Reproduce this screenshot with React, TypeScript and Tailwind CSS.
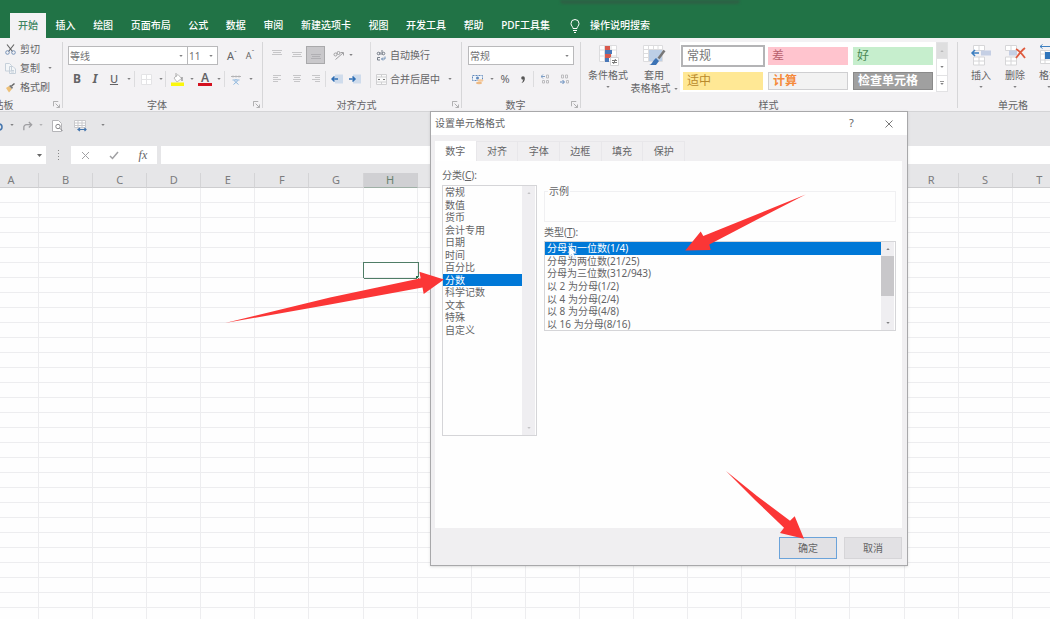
import React, { useState } from 'react';
import clsx from 'clsx';

const ribbonTabs = ['开始', '插入', '绘图', '页面布局', '公式', '数据', '审阅', '新建选项卡', '视图', '开发工具', '帮助', 'PDF工具集'];
const columns = 'ABCDEFGHIJKLMNOPQRST'.split('');
const rows = Array.from({ length: 29 }, (_, i) => i + 1);
const dialogTabs = ['数字', '对齐', '字体', '边框', '填充', '保护'];
const categories = ['常规', '数值', '货币', '会计专用', '日期', '时间', '百分比', '分数', '科学记数', '文本', '特殊', '自定义'];
const fractionTypes = [
  '分母为一位数(1/4)',
  '分母为两位数(21/25)',
  '分母为三位数(312/943)',
  '以 2 为分母(1/2)',
  '以 4 为分母(2/4)',
  '以 8 为分母(4/8)',
  '以 16 为分母(8/16)',
];

const cellStyles = [
  { name: '常规', className: 'bg-white text-[#777] outline-2 outline-[#b4b4b6]' },
  { name: '差', className: 'bg-[#ffc4ce] text-[#b8606c]' },
  { name: '好', className: 'bg-[#c6eecd] text-[#4b8a55]' },
  { name: '适中', className: 'bg-[#ffe895] text-[#b98a2c]' },
  { name: '计算', className: 'border border-[#cfcfd1] bg-[#f2f2f2] font-bold text-[#f58a3c]' },
  { name: '检查单元格', className: 'border border-[#8a8a8a] bg-[#a0a0a0] font-bold text-white' },
];

const Caret: React.FC<{ className?: string }> = ({ className }) => (
  <svg viewBox="0 0 5 3" className={clsx('h-[2px] w-1 shrink-0', className)} fill="#808082">
    <path d="M0 0h5L2.500 3z" />
  </svg>
);

const CaretButton: React.FC<{ label: string; className: string }> = ({ label, className }) => (
  <button aria-label={label} className={clsx('flex h-4 shrink-0 items-center justify-center', className)}>
    <Caret />
  </button>
);

const IconButton: React.FC<{ label: string; className: string; children: React.ReactNode }> = ({ label, className, children }) => (
  <button aria-label={label} className={clsx('flex h-[18px] shrink-0 items-center justify-center', className)}>
    {children}
  </button>
);

const Divider = () => <span className="h-4 w-px shrink-0 bg-[#dcdcde]" />;

const Group: React.FC<{ title: string; className: string; launcher?: boolean; children: React.ReactNode }> = ({
  title,
  className,
  launcher,
  children,
}) => (
  <section className={clsx('relative flex h-[73px] shrink-0 flex-col', className)}>
    <div className="h-[60px]">{children}</div>
    <div className="flex h-[13px] items-center leading-3">
      <span className="flex-1 pr-[2px] text-center">{title}</span>
      {launcher && (
        <button aria-label={`${title}设置`} className="flex w-[10px] justify-start">
          <svg viewBox="0 0 8 8" className="h-[7px] w-[7px]" fill="none" stroke="#a2a2a4">
            <path d="M.5 6V.5H6M3 3l4 4M7.500 4v3.500H4" />
          </svg>
        </button>
      )}
    </div>
    <span className="absolute top-1 right-0 h-[66px] w-px bg-[#d6d6d8]" />
  </section>
);

const Select: React.FC<{ label: string; value: string; className: string }> = ({ label, value, className }) => (
  <label className={clsx('relative flex h-[19px] items-center border border-[#b9b9bb] bg-white', className)}>
    <select aria-label={label} className="w-full appearance-none bg-transparent pl-px leading-4 text-[#707072] outline-none">
      <option>{value}</option>
    </select>
    <Caret className="absolute right-1" />
  </label>
);

const AlignLines: React.FC<{ d: string }> = ({ d }) => (
  <svg viewBox="0 0 10 10" className="h-[10px] w-[10px]" fill="none" stroke="#c6c6c8">
    <path d={d} />
  </svg>
);

const ClipboardGroup = () => (
  <Group title="剪贴板" className="-ml-[54px] w-[117px]" launcher>
    <div className="flex flex-col gap-px pt-[2px] pl-[59px]">
      <button className="flex h-[18px] items-center gap-1">
        <svg viewBox="0 0 11 11" className="h-[11px] w-[11px]" fill="none">
          <path d="M2 .5l5.500 7M9 .5L3.500 7.500" stroke="#666" strokeWidth="1.200" />
          <circle cx="2.500" cy="8.500" r="1.800" stroke="#7793b8" />
          <circle cx="8.500" cy="8.500" r="1.800" stroke="#7793b8" />
        </svg>
        剪切
      </button>
      <div className="flex items-center">
        <button className="flex h-[18px] items-center gap-1">
          <svg viewBox="0 0 11 11" className="h-[11px] w-[11px]" fill="#f4f6f8" stroke="#c6d0da">
            <path d="M.5.500h4l2 2v5.500h-6zM4.500 3.500h3.500l2.500 2.500v4.500h-6z" />
            <path d="M6 7.500h3M6 9h3" />
          </svg>
          复制
        </button>
        <CaretButton label="复制选项" className="ml-1 w-3" />
      </div>
      <button className="flex h-[18px] items-center gap-1">
        <svg viewBox="0 0 11 11" className="h-[11px] w-[11px]">
          <path d="M1 6l3-2 3 3-3 3.500z" fill="#edc078" />
          <path d="M4 4l1.500-1L8 5.500 7 7z" fill="#777" />
          <path d="M6.500 4L9.500 1.500" stroke="#666" strokeWidth="1.600" />
        </svg>
        格式刷
      </button>
    </div>
  </Group>
);

const FontGroup = () => (
  <Group title="字体" className="w-[200px]" launcher>
    <div className="flex items-center pt-2 pl-[5px]">
      <Select label="字体" value="等线" className="w-[120px]" />
      <Select label="字号" value="11" className="-ml-px w-[31px]" />
      <button aria-label="增大字号" className="ml-[5px] w-[18px] text-[11px] leading-4">
        A<sup className="text-[7px]">ˆ</sup>
      </button>
      <button aria-label="减小字号" className="w-[18px] text-[9px] leading-4">
        A<sup className="text-[7px]">ˇ</sup>
      </button>
    </div>
    <div className="flex items-center pt-[5px] pl-[5px]">
      <button className="w-[18px] text-xs leading-4 font-bold">B</button>
      <button className="w-[18px] text-xs leading-4 font-bold italic">I</button>
      <button className="w-5 text-[11px] leading-4 font-medium underline">U</button>
      <CaretButton label="下划线选项" className="w-[10px]" />
      <Divider />
      <IconButton label="边框" className="w-[22px]">
        <svg viewBox="0 0 11 11" className="h-[11px] w-[11px]" fill="#fff" stroke="#e4e4e6">
          <path d="M.5.500h10v10H.5zM5.500.500v10M.5 5.500h10" />
        </svg>
      </IconButton>
      <CaretButton label="边框选项" className="w-2" />
      <Divider />
      <IconButton label="填充颜色" className="w-[22px]">
        <svg viewBox="0 0 13 13" className="h-[13px] w-[13px]">
          <path d="M3 5l4-3.500 3.500 4L6 9z" fill="#fff" stroke="#bbb" />
          <path d="M5 0v4" stroke="#aaa" />
          <path d="M11 4v4" stroke="#777" />
          <path d="M0 9.500h13V13H0z" fill="#fbf70c" />
        </svg>
      </IconButton>
      <CaretButton label="填充选项" className="w-2" />
      <button aria-label="字体颜色" className="ml-[2px] flex h-[14px] w-[14px] flex-col items-center border-b-[3px] border-[#d4111f] text-xs leading-[11px] font-semibold">
        A
      </button>
      <CaretButton label="字体颜色选项" className="ml-[2px] w-[10px]" />
      <Divider />
      <IconButton label="拼音指南" className="w-[22px]">
        <svg viewBox="0 0 10 11" className="h-[11px] w-[10px]" fill="none">
          <path d="M0 2.500h10M2 1.500v2M5 1.500v2M8 1.500v2" stroke="#b4b4b6" />
          <path d="M1.500 6h7M5 5v1M3 6.500l4.500 4M7 6.500l-4.500 4" stroke="#8db6dd" />
        </svg>
      </IconButton>
      <CaretButton label="拼音选项" className="w-2" />
    </div>
  </Group>
);

const AlignGroup = () => (
  <Group title="对齐方式" className="w-[199px]" launcher>
    <div className="flex">
      <div className="flex w-[107px] flex-col gap-[6px] pt-2 pl-1">
        <div className="flex items-center">
          <IconButton label="顶端对齐" className="w-5">
            <AlignLines d="M0 .5h10M1 2.500h8M0 4.500h10" />
          </IconButton>
          <IconButton label="垂直居中" className="w-[19px]">
            <AlignLines d="M0 2.500h10M1 4.500h8M0 6.500h10" />
          </IconButton>
          <IconButton label="底端对齐" className="w-[19px] border border-[#a9a9ab] bg-[#c9c8cb]">
            <svg viewBox="0 0 10 10" className="h-[10px] w-[10px]" fill="none" stroke="#b0afb3">
              <path d="M0 4.500h10M1 6.500h8M0 8.500h10" />
            </svg>
          </IconButton>
          <IconButton label="方向" className="ml-1 w-[18px]">
            <svg viewBox="0 0 11 11" className="h-[11px] w-[11px]" fill="none" stroke="#a0a0a2">
              <path d="M2.500 9.500L10 3M7.500 2.500H10.500V5.500" />
              <circle cx="2.500" cy="4.500" r="1.500" />
              <circle cx="5.500" cy="3" r="1.500" />
            </svg>
          </IconButton>
          <CaretButton label="方向选项" className="w-2" />
        </div>
        <div className="flex items-center">
          <IconButton label="左对齐" className="w-5">
            <AlignLines d="M1 1.500h8M1 3.500h5M1 5.500h8M1 7.500h5" />
          </IconButton>
          <IconButton label="居中" className="w-[19px]">
            <AlignLines d="M1 1.500h8M2 3.500h6M1 5.500h8M2 7.500h6" />
          </IconButton>
          <IconButton label="右对齐" className="w-[19px]">
            <AlignLines d="M1 1.500h8M4 3.500h5M1 5.500h8M4 7.500h5" />
          </IconButton>
          <Divider />
          <IconButton label="减少缩进" className="ml-[2px] w-[18px]">
            <svg viewBox="0 0 12 10" className="h-[10px] w-3" fill="none">
              <path d="M4 .5h8v9H4z" fill="#cfdcec" />
              <path d="M7 5H1M3.500 2.500L1 5l2.500 2.500" stroke="#2f6fb5" strokeWidth="1.500" />
            </svg>
          </IconButton>
          <IconButton label="增加缩进" className="w-[18px]">
            <svg viewBox="0 0 12 10" className="h-[10px] w-3" fill="none">
              <path d="M4 .5h8v9H4z" fill="#cfdcec" />
              <path d="M0 5h6M3.500 2.500L6 5 3.500 7.500" stroke="#2f6fb5" strokeWidth="1.500" />
            </svg>
          </IconButton>
        </div>
      </div>
      <div className="mt-1 flex flex-col gap-[6px] border-l border-[#dcdcde] pt-1 pl-[5px]">
        <button className="flex h-[18px] items-center gap-[3px]">
          <svg viewBox="0 0 11 11" className="h-[11px] w-[11px]" fill="none" stroke="#777f8a">
            <circle cx="2.500" cy="3.500" r="1.300" />
            <path d="M4 2v3M6 0v5" />
            <circle cx="7.500" cy="3.500" r="1.300" />
            <path d="M4 7.500H1.500v2.500H4" />
            <path d="M9 6.500V9H5.500M7 7.500L5.500 9 7 10.500" stroke="#6f8fb5" />
          </svg>
          自动换行
        </button>
        <div className="flex items-center">
          <button className="flex h-[18px] items-center gap-[3px]">
            <svg viewBox="0 0 11 11" className="h-[11px] w-[11px]" fill="#fafafa" stroke="#d0d0d2">
              <path d="M.5.500h10v10H.5zM.5 3h10M.5 8h10M5.500 0v3M5.500 8v3" />
              <path d="M2 5.500h2M7 5.500h2" stroke="#777" />
            </svg>
            合并后居中
          </button>
          <CaretButton label="合并选项" className="ml-1 w-3" />
        </div>
      </div>
    </div>
  </Group>
);

const NumberGroup = () => (
  <Group title="数字" className="w-[119px]" launcher>
    <div className="pt-2 pr-[7px] pl-[6px]">
      <Select label="数字格式" value="常规" className="w-full" />
    </div>
    <div className="flex items-center pt-[5px] pl-[6px]">
      <IconButton label="会计数字格式" className="w-[19px]">
        <svg viewBox="0 0 12 11" className="h-[11px] w-3">
          <path d="M.5 1.500h10v5H.5z" fill="#eef4fb" stroke="#6189bb" strokeDasharray="2 1" />
          <circle cx="5.500" cy="4" r="1.500" fill="#6189bb" />
          <ellipse cx="8.500" cy="6.500" rx="3" ry="1.300" fill="#f5c99b" />
          <ellipse cx="7" cy="9" rx="3" ry="1.300" fill="#edba83" />
        </svg>
      </IconButton>
      <CaretButton label="会计格式选项" className="w-[10px]" />
      <button className="w-4 text-[11px] leading-4">%</button>
      <button aria-label="千位分隔样式" className="flex h-4 w-5 items-center justify-center">
        <svg viewBox="0 0 4 7" className="h-[7px] w-1" fill="#555">
          <circle cx="2" cy="2" r="1.800" />
          <path d="M3.800 2C4 5 2.500 6.500.5 7c1-1 1.500-2 1.500-3z" />
        </svg>
      </button>
      <Divider />
      <IconButton label="增加小数位数" className="w-[22px]">
        <svg viewBox="0 0 9 10" className="h-[10px] w-[9px]" fill="none">
          <path d="M4 2.500H0M2 .5l-2 2 2 2" stroke="#7f9fc6" />
          <path d="M5.500 1h2v3h-2zM1.500 6.500h2V9h-2zM5.500 6.500h2V9h-2z" stroke="#bcbcbf" />
        </svg>
      </IconButton>
      <IconButton label="减少小数位数" className="w-4">
        <svg viewBox="0 0 9 10" className="h-[10px] w-[9px]" fill="none">
          <path d="M1.500 1h2v3h-2zM5.500 1h2v3h-2zM6.500 6.500h2V9h-2z" stroke="#bcbcbf" />
          <path d="M0 8h4M2.500 6l2 2-2 2" stroke="#6189bb" />
        </svg>
      </IconButton>
    </div>
  </Group>
);

const StylesGroup = () => (
  <Group title="样式" className="w-[377px]">
    <div className="flex">
      <button className="ml-[7px] flex w-10 flex-col items-center pt-[7px] leading-[13px]">
        <svg viewBox="0 0 21 21" className="mb-[3px] h-[21px] w-[21px]">
          <path d="M1.500.500h17v16h-17zM6.500.500v16M13 .5v16M1 5h18M1 11h18" fill="#fff" stroke="#dcdcde" />
          <path d="M7 1h5v4H7z" fill="#d9594c" />
          <path d="M7 5h7v4H7z" fill="#4a78b8" />
          <path d="M7 9h6v4H7z" fill="#d9594c" />
          <path d="M7 13h4v4H7z" fill="#4a78b8" />
          <path d="M12.500 12.500h8v8h-8z" fill="#fff" stroke="#d4d4d6" />
          <path d="M14 15.500h5M14 17.500h5M17.500 14l-2 5" stroke="#777" />
        </svg>
        条件格式
        <Caret className="mt-1" />
      </button>
      <button className="ml-[2px] flex w-12 flex-col items-center pt-[7px] leading-[13px]">
        <svg viewBox="0 0 23 21" className="mb-[3px] h-[21px] w-[23px]">
          <path d="M.5.500h19v16H.5zM.5 4.500h19M5.500.500v16M10.500.500v16M15 .5v16M.5 8.500h19M.5 12.500h19" fill="#fff" stroke="#dcdcde" />
          <path d="M6 5h13v11H6z" fill="#bccfe6" />
          <path d="M21.500 5.500l-6 8" stroke="#777" strokeWidth="2.500" />
          <path d="M13 13l3 3-3 4H6c3 0 4-5 7-7z" fill="#3c73b5" />
        </svg>
        套用
        <span className="flex items-center gap-[3px] whitespace-nowrap">
          表格格式
          <Caret />
        </span>
      </button>
      <div className="mt-1 ml-[2px] flex h-[50px] bg-white pl-[3px] text-xs">
        <div className="grid grid-cols-3 gap-[5px] pt-[5px]">
          {cellStyles.map((s) => (
            <button key={s.name} className={clsx('flex h-[18px] w-20 items-center px-1 leading-4', s.className)}>
              {s.name}
            </button>
          ))}
        </div>
        <div className="ml-[3px] flex w-3 flex-col border border-[#e2e2e4]">
          <button aria-label="上一行" className="flex flex-1 items-center justify-center bg-[#dededf]">
            <Caret className="rotate-180 opacity-40" />
          </button>
          <button aria-label="下一行" className="flex flex-1 items-center justify-center border-y border-[#e2e2e4]">
            <Caret />
          </button>
          <button aria-label="其他样式" className="flex flex-1 flex-col items-center justify-center gap-px">
            <span className="h-px w-1 bg-[#999]" />
            <Caret />
          </button>
        </div>
      </div>
    </div>
  </Group>
);

const CellsGroup = () => (
  <Group title="单元格" className="w-[112px]">
    <div className="flex pt-[6px] pl-[6px]">
      <button className="flex w-[34px] flex-col items-center leading-[13px]">
        <svg viewBox="0 0 22 22" className="mb-[3px] h-[22px] w-[22px]" fill="#fff">
          <path d="M3.500 1.500h11v5h-11zM3.500 13h11v8h-11zM9 1.500v5M9 13v8M3.500 17h11" stroke="#d6d6d8" />
          <path d="M11 6.500h10v5H11z" fill="#c5cfe4" />
          <path d="M9 9H2M5 6L2 9l3 3" fill="none" stroke="#3d7fc0" strokeWidth="1.500" />
        </svg>
        插入
        <Caret className="mt-1" />
      </button>
      <button className="flex w-[34px] flex-col items-center leading-[13px]">
        <svg viewBox="0 0 22 22" className="mb-[3px] h-[22px] w-[22px]" fill="#fff">
          <path d="M1.500 1.500h11v5h-11zM1.500 13h11v8h-11zM7 1.500v5M7 13v8M1.500 17h11" stroke="#d6d6d8" />
          <path d="M5 6.500h8v5H5z" fill="#c5cfe4" />
          <path d="M12 5c4 2 6 5 9 9M21 4c-4 3-6 6-9 10" fill="none" stroke="#de5b3f" strokeWidth="1.800" />
        </svg>
        删除
        <Caret className="mt-1" />
      </button>
      <button className="flex w-[34px] flex-col items-center leading-[13px]">
        <svg viewBox="0 0 22 22" className="mb-[3px] h-[22px] w-[22px]" fill="#fff">
          <path d="M2.500 6.500h17v13h-17zM7 6.500v13M14 6.500v13M2.500 10h17M2.500 16h17" stroke="#d6d6d8" />
          <path d="M2 2.500h18M4.500.500L2 2.500l2.500 2M17.500.500L20 2.500l-2.500 2" fill="none" stroke="#3d7fc0" />
          <path d="M7 8h7v7H7z" fill="#2f75bb" />
        </svg>
        格式
        <Caret className="mt-1" />
      </button>
    </div>
  </Group>
);

const QuickAccess = () => (
  <div className="flex h-[35px] items-start border-t border-[#d4d4d6] pt-[5px]">
    <IconButton label="撤消" className="-ml-[9px] w-[14px]">
      <svg viewBox="0 0 12 12" className="h-3 w-3" fill="none" stroke="#4475ad" strokeWidth="1.500">
        <path d="M4 1L1 4l3 3M1 4h6a3 3 0 010 6H5" />
      </svg>
    </IconButton>
    <CaretButton label="撤消选项" className="w-[13px]" />
    <IconButton label="恢复" className="w-[18px]">
      <svg viewBox="0 0 12 12" className="h-[11px] w-[11px]" fill="none" stroke="#a0a0a3" strokeWidth="1.500">
        <path d="M7.500 1l3 3-3 3M10.500 4H5a3 3 0 00-3 3.500V10" />
      </svg>
    </IconButton>
    <CaretButton label="恢复选项" className="w-[10px] opacity-50" />
    <IconButton label="打印预览" className="w-[22px]">
      <svg viewBox="0 0 11 12" className="h-3 w-[11px]" fill="#fff" stroke="#b5b5b8">
        <path d="M.5.500h6l3 3v8h-9z" />
        <circle cx="6" cy="6.500" r="2.200" stroke="#88888c" />
        <path d="M7.500 8l3 3" stroke="#88888c" />
      </svg>
    </IconButton>
    <IconButton label="朗读单元格" className="w-6">
      <svg viewBox="0 0 13 12" className="h-3 w-[13px]" fill="#fff">
        <path d="M.5.500h11v7H.5zM.5 3h11M.5 5.500h11M4 .5v7M8 .5v7" stroke="#c9c9cc" />
        <path d="M4 9.500h8M6 8L4 9.500 6 11M10.500 8l1.500 1.500-1.500 1.500" fill="none" stroke="#4475ad" strokeWidth="1.200" />
      </svg>
    </IconButton>
    <CaretButton label="自定义快速访问工具栏" className="w-[22px]" />
  </div>
);

const FormulaBar = () => (
  <div className="flex h-[18px]">
    <div className="flex w-[46px] items-center bg-white">
      <input aria-label="名称框" className="w-8 outline-none" />
      <button aria-label="名称列表" className="pl-[5px]">
        <svg viewBox="0 0 5 3" className="h-[3px] w-[5px]" fill="#666">
          <path d="M0 0h5L2.500 3z" />
        </svg>
      </button>
    </div>
    <div className="flex w-[25px] flex-col items-center justify-center gap-[2px]">
      <span className="h-px w-px bg-[#888]" />
      <span className="h-px w-px bg-[#888]" />
      <span className="h-px w-px bg-[#888]" />
      <span className="h-px w-px bg-[#888]" />
    </div>
    <div className="flex w-[86px] items-center justify-around bg-white">
      <button aria-label="取消输入">
        <svg viewBox="0 0 9 9" className="h-[9px] w-[9px]" fill="none" stroke="#a0a0a3">
          <path d="M1 1l7 7M8 1L1 8" />
        </svg>
      </button>
      <button aria-label="输入">
        <svg viewBox="0 0 10 9" className="h-[9px] w-[10px]" fill="none" stroke="#a0a0a3" strokeWidth="1.500">
          <path d="M1 5l2.500 2.500L9 1" />
        </svg>
      </button>
      <button className="font-['Liberation_Serif',serif] text-xs leading-4 italic">fx</button>
    </div>
    <input aria-label="编辑栏" className="ml-1 min-w-0 flex-1 bg-white px-1 outline-none" />
  </div>
);

const Sheet = () => (
  <table className="w-[calc(100%+17px)] table-fixed border-separate border-spacing-0 bg-[#fefefe]">
    <thead>
      <tr>
        {columns.map((c, i) => (
          <th
            key={c}
            className={clsx(
              'h-[15px] border-r border-b p-0 text-[11px] leading-[14px] font-normal',
              i === 0 && 'w-[39px] pr-4',
              c === 'H' ? 'border-[#9fb0a6] border-r-[#cfcfd1] bg-[#d0d0d3] text-[#66806f]' : 'border-[#cdcdcf] border-r-[#d4d4d6] bg-[#e6e6e8] text-[#7c7c7e]',
            )}
          >
            {c}
          </th>
        ))}
      </tr>
    </thead>
    <tbody>
      {rows.map((r) => (
        <tr key={r}>
          {columns.map((c) => (
            <td
              key={c}
              className={clsx(
                'relative h-[15px] border-r border-b border-[#ededef] p-0',
                c === 'H' && r === 6 && 'outline-1 outline-[#4f7d66]',
              )}
            >
              {c === 'H' && r === 6 && <span className="absolute -right-px -bottom-px h-[2px] w-[2px] bg-[#217346]" />}
            </td>
          ))}
        </tr>
      ))}
    </tbody>
  </table>
);

interface ListProps {
  id: string;
  items: string[];
  value: string;
  onChange: (v: string) => void;
  className: string;
}

const ListBox: React.FC<ListProps> = ({ id, items, value, onChange, className }) => (
  <ul role="listbox" aria-labelledby={id} className={clsx('flex min-w-0 flex-1 flex-col', className)}>
    {items.map((item) => (
      <li
        key={item}
        role="option"
        aria-selected={item === value}
        onClick={() => onChange(item)}
        className={clsx('flex flex-1 cursor-default items-center pl-[2px] leading-3', item === value && 'bg-[#0078d7] text-white')}
      >
        {item}
      </li>
    ))}
  </ul>
);

const ScrollBar: React.FC<{ thumb?: boolean }> = ({ thumb }) => (
  <div className="mr-px flex w-[13px] flex-col items-center bg-[#efeef1]">
    <span className="flex h-[14px] items-center">
      <Caret className={clsx('rotate-180', !thumb && 'opacity-40')} />
    </span>
    <span className="w-full flex-1">{thumb && <span className="block h-10 bg-[#c8c7ca]" />}</span>
    <span className="flex h-[15px] items-center">
      <Caret className={clsx(!thumb && 'opacity-40')} />
    </span>
  </div>
);

const FormatCellsDialog = () => {
  const [tab, setTab] = useState('数字');
  const [category, setCategory] = useState('分数');
  const [type, setType] = useState(fractionTypes[0]);

  return (
    <div
      role="dialog"
      aria-label="设置单元格格式"
      className="absolute top-[111px] left-[430px] flex w-[478px] flex-col border border-[#a8a8aa] bg-[#f0eff1] shadow-sm"
    >
      <header className="flex h-[23px] items-center bg-white pl-1">
        <h1 className="flex-1">设置单元格格式</h1>
        <button aria-label="帮助" className="w-[37px] text-[11px]">
          ?
        </button>
        <button aria-label="关闭" className="flex w-[37px] justify-center">
          <svg viewBox="0 0 8 8" className="h-2 w-2" fill="none" stroke="#777">
            <path d="M.5.500l7 7M7.500.500l-7 7" />
          </svg>
        </button>
      </header>
      <div role="tablist" className="flex h-[26px] items-end pt-1 pl-1">
        <div className="flex w-[250px]">
          {dialogTabs.map((t) => (
            <button
              key={t}
              role="tab"
              aria-selected={t === tab}
              onClick={() => setTab(t)}
              className={clsx('h-5 flex-1 border-r border-[#e8e7ea]', t === tab ? 'bg-white' : 'border-t')}
            >
              {t}
            </button>
          ))}
        </div>
      </div>
      <div className="mr-[5px] ml-1 flex h-[367px] gap-[7px] bg-[#fefefe] pt-[7px] pr-[6px] pl-[7px]">
        <div className="w-[95px]">
          <div id="category-label" className="h-[17px] leading-[15px]">
            分类(<u>C</u>):
          </div>
          <div className="flex h-[251px] border border-[#d5d5d8]">
            <ListBox id="category-label" items={categories} value={category} onChange={setCategory} className="h-[150px]" />
            <ScrollBar />
          </div>
        </div>
        <div className="min-w-0 flex-1 pt-[17px]">
          <fieldset className="h-[37px] border border-[#f0f0f2] pl-[3px]">
            <legend className="px-px leading-3">示例</legend>
          </fieldset>
          <div id="type-label" className="mt-[2px] h-[17px] leading-4">
            类型(<u>T</u>):
          </div>
          <div className="flex h-[90px] border border-[#d5d5d8]">
            <ListBox id="type-label" items={fractionTypes} value={type} onChange={setType} className="h-[88px]" />
            <ScrollBar thumb />
          </div>
        </div>
      </div>
      <footer className="flex h-[37px] items-start justify-end gap-[7px] pt-[9px] pr-[5px]">
        <button className="h-[22px] w-[58px] border border-[#6ba3da] bg-[#e2e1e4]">确定</button>
        <button className="h-[22px] w-[58px] border border-[#d6d5d8] bg-[#e2e1e4]">取消</button>
      </footer>
    </div>
  );
};

// Red guide arrows and the mouse pointer
const Annotations = () => (
  <svg viewBox="0 0 1050 619" className="pointer-events-none absolute top-0 left-0 h-[619px] w-[1050px]" fill="#fb3636">
    <path d="M569 246v10.500l2.500-2 2 4 2-1-2-4h3z" fill="#fff" stroke="#9dbfe2" strokeWidth=".5" />
    <path d="M225 323L330 297.500 420.700 278.300 419.300 271.700 444 279.500 423.700 294 422.500 287.500 330 304.500z" />
    <path d="M805.700 194.500L703.300 236 700.700 231.500 685.300 250.500 710.700 250 709.300 244.500 760 218z" />
    <path d="M726 471L757 496 790 520.700 794.700 516.300 804 538.700 780 533 784 527.700 755 500z" />
  </svg>
);

const App: React.FC = () => {
  const [activeTab, setActiveTab] = useState('开始');

  return (
    <div className="relative h-screen overflow-hidden bg-[#e6e6e8] font-['Noto_Sans','Noto_Sans_CJK_SC',sans-serif] text-[10px] text-[#646466]">
      <header className="flex h-[38px] items-end bg-[#217346] text-white">
        <nav className="ml-[10px] flex w-[548px] shrink-0 justify-between">
          {ribbonTabs.map((t) => (
            <button
              key={t}
              onClick={() => setActiveTab(t)}
              className={clsx('h-[25px] px-2 font-medium whitespace-nowrap', t === activeTab && 'bg-[#f3f2f4] text-[#3d8560]')}
            >
              {t}
            </button>
          ))}
        </nav>
        <button className="ml-3 flex h-[25px] items-center gap-[10px] font-medium">
          <svg viewBox="0 0 10 14" className="h-[14px] w-[10px]" fill="none" stroke="#fff">
            <path d="M3 9.500C3 7.500 1 7 1 4.500a4 4 0 018 0C9 7 7 7.500 7 9.500zM3 11.500h4M4 13.500h2" />
          </svg>
          操作说明搜索
        </button>
      </header>

      <div className="flex overflow-hidden bg-[#f3f2f4]">
        <ClipboardGroup />
        <FontGroup />
        <AlignGroup />
        <NumberGroup />
        <StylesGroup />
        <CellsGroup />
      </div>

      <QuickAccess />
      <FormulaBar />
      <main className="pt-[9px]">
        <Sheet />
      </main>

      <FormatCellsDialog />
      <Annotations />
      <div className="absolute top-0 left-[560px] h-1 w-[180px] rounded-b-full bg-[#2d6245] blur-[1px]" />
    </div>
  );
};

export default App;
